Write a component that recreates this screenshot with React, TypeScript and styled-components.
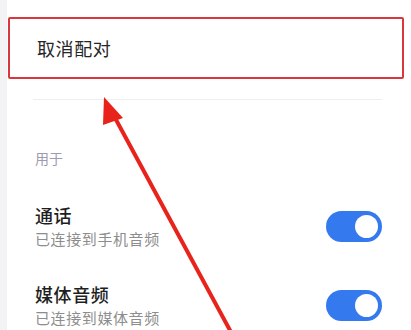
import React from "react";
import styled, { createGlobalStyle } from "styled-components";

const Global = createGlobalStyle`
  html, body { margin: 0; padding: 0; }
  body {
    width: 411px;
    height: 330px;
    overflow: hidden;
    font-family: "Noto Sans CJK SC", "Noto Sans", sans-serif;
    background: #f3f3f6;
  }
`;

const Page = styled.div`
  position: relative;
  display: flex;
  height: 330px;
  padding-left: 7px;
  box-sizing: border-box;
`;

const Card = styled.div`
  flex: 1;
  display: flex;
  flex-direction: column;
  background: #ffffff;
`;

const UnpairRow = styled.div<{ $highlight?: boolean }>`
  margin: 17px 7px 0 1px;
  height: 62px;
  box-sizing: border-box;
  display: flex;
  align-items: center;
  padding-left: 27px;
  border: 2px solid ${(p) => (p.$highlight ? "#d8383d" : "transparent")};
  border-radius: 2px;
  font-size: 18px;
  color: #262626;
  letter-spacing: 0.6px;
`;

const Content = styled.div`
  display: flex;
  flex-direction: column;
  padding: 0 29px 0 28px;
`;

const Divider = styled.div`
  height: 1px;
  margin: 20px 0 0 -2px;
  background: #eeeef1;
`;

const SectionLabel = styled.div`
  margin-top: 49px;
  font-size: 14px;
  line-height: 18px;
  color: #9c9cae;
`;

const List = styled.div`
  display: flex;
  flex-direction: column;
  gap: 32px;
  margin-top: 36px;
`;

const Row = styled.div`
  display: flex;
  align-items: center;
  justify-content: space-between;
`;

const TextCol = styled.div`
  display: flex;
  flex-direction: column;
`;

const Title = styled.div`
  font-size: 18px;
  line-height: 24px;
  font-weight: 500;
  color: #1e1e1e;
  letter-spacing: 0.6px;
`;

const Subtitle = styled.div`
  margin-top: 1px;
  font-size: 15px;
  line-height: 22px;
  color: #8d8d8d;
  letter-spacing: 0.6px;
`;

const Toggle = styled.div<{ $on: boolean }>`
  width: 56px;
  height: 31px;
  border-radius: 16px;
  background: ${(p) => (p.$on ? "#3479ee" : "#d0d0d6")};
  display: flex;
  align-items: center;
  justify-content: ${(p) => (p.$on ? "flex-end" : "flex-start")};
  padding: 0 4px;
  box-sizing: border-box;
`;

const Knob = styled.div`
  width: 23px;
  height: 23px;
  border-radius: 50%;
  background: #ffffff;
`;

const ArrowLayer = styled.svg`
  position: absolute;
  left: 0;
  top: 0;
  pointer-events: none;
`;

const settings = [
  { title: "通话", sub: "已连接到手机音频", on: true },
  { title: "媒体音频", sub: "已连接到媒体音频", on: true },
];

export default function App() {
  return (
    <>
      <Global />
      <Page>
        <Card>
          <UnpairRow $highlight>取消配对</UnpairRow>
          <Content>
            <Divider />
            <SectionLabel>用于</SectionLabel>
            <List>
              {settings.map((s) => (
                <Row key={s.title}>
                  <TextCol>
                    <Title>{s.title}</Title>
                    <Subtitle>{s.sub}</Subtitle>
                  </TextCol>
                  <Toggle $on={s.on}>
                    <Knob />
                  </Toggle>
                </Row>
              ))}
            </List>
          </Content>
        </Card>
        <ArrowLayer width="411" height="330" viewBox="0 0 411 330">
          <line x1="114" y1="116" x2="232" y2="334" stroke="#e8231b" strokeWidth="4" />
          <polygon points="104,97 123,118 103,125" fill="#e8231b" />
        </ArrowLayer>
      </Page>
    </>
  );
}
